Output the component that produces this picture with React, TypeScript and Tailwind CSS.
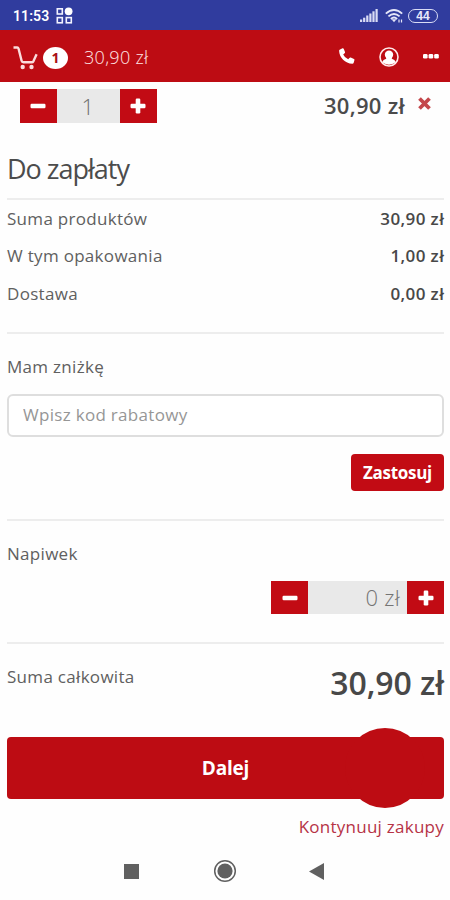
import React from "react";

function StatusBar() {
  return (
    <div className="flex h-[30px] items-center bg-[#303c9e] pt-[1px] pl-[13px] pr-[12px] text-white">
      <span className="font-[Roboto,sans-serif] text-[14px] leading-none font-semibold tracking-[0.1px]">11:53</span>
      <svg className="ml-[7px]" width="18" height="18" viewBox="0 0 18 18" fill="none" stroke="#f1f2ff" strokeWidth="1.6">
        <rect x="1.3" y="1.8" width="5" height="5.200" />
        <rect x="1.3" y="10.6" width="5" height="5.200" />
        <rect x="10.300" y="10.6" width="5" height="5.200" />
        <circle cx="12.6" cy="4.3" r="3.9" fill="#fff" stroke="none" />
      </svg>
      <svg className="ml-auto" width="18" height="13" viewBox="0 0 18 13" fill="#d9dcf5">
        <rect x="0" y="10.5" width="2.2" height="2.5" />
        <rect x="3.1" y="8.7" width="2.2" height="4.3" />
        <rect x="6.2" y="6.5" width="2.2" height="6.5" />
        <rect x="9.3" y="4.5" width="2.2" height="8.5" />
        <rect x="12.4" y="2.3" width="2.2" height="10.7" />
        <rect x="15.5" y="0" width="2.2" height="13" />
      </svg>
      <svg className="ml-[7px]" width="18" height="14" viewBox="0 0 18 14" fill="none" stroke="#e4e6f8" strokeWidth="1.9">
        <path d="M.8 4.6Q9-2.6 17.200 4.600" />
        <path d="M3.400 7.400Q9 2.400 14.600 7.400" />
        <path d="M5.900 10Q9 7 12.100 10" />
        <path d="M6.500 10.200L9 13.200L11.500 10.200Z" fill="#e4e6f8" stroke="none" />
        <path d="M14 10.500v3M16.500 10.500v3" strokeWidth="1.200" />
      </svg>
      <div className="ml-[5px] flex h-[14px] w-[30px] items-center justify-center rounded-full border-[1.500px] border-[#d9dcf5] font-['Liberation_Sans',sans-serif] text-[12px] leading-none font-bold text-[#e8eafb]">
        44
      </div>
    </div>
  );
}

function Header() {
  return (
    <div className="flex h-[52px] items-center bg-[#bd0c13] pl-[13px] pr-[11px] text-white">
      <svg className="mt-[2px]" width="25" height="25" viewBox="0 0 25 25" fill="none" stroke="#fbdcdc" strokeWidth="2.400">
        <path d="M.5 2.500H4.200Q5.200 2.500 5.500 3.500L8.600 15.800Q9 17.300 10.400 17.300H18.700Q19.900 17.300 20.500 16.100L23.600 9.300" />
        <circle cx="9.700" cy="22" r="2.200" fill="#fbdcdc" stroke="none" />
        <circle cx="18.500" cy="22" r="2.200" fill="#fbdcdc" stroke="none" />
      </svg>
      <div className="mt-[3px] ml-[5px] flex h-[22px] w-[25px] items-center justify-center rounded-[50%] bg-white text-[14px] leading-none font-bold text-[#a90f16]">1</div>
      <span className="mt-[1px] ml-[16px] text-[18px] leading-none font-light tracking-[0.300px] text-[#ffe5e5]">30,90 zł</span>
      <svg className="ml-auto" width="16" height="16" viewBox="0 0 16 16" fill="#fff">
        <path d="M.6 1.800L3.500.3Q4.300 0 4.700.8L6 4Q6.300 4.800 5.600 5.300L4.200 6.400Q5.800 9.800 9.200 11.300L10.400 9.900Q10.900 9.300 11.700 9.600L15 11.100Q15.700 11.500 15.400 12.300L14.600 14.900Q14.300 15.700 13.400 15.700C6 15.500.4 9.600.1 2.700Q.1 2.100.6 1.800Z" />
      </svg>
      <svg className="mt-[2px] ml-[24px]" width="20" height="20" viewBox="0 0 20 20">
        <circle cx="10" cy="10" r="9" fill="none" stroke="#ffe9e9" strokeWidth="1.600" />
        <circle cx="10" cy="7.700" r="4.200" fill="#fff" />
        <path d="M3.200 15.300Q4 12.500 7.200 11.700V10H12.800V11.700Q16 12.500 16.800 15.300Q10 20 3.200 15.300Z" fill="#fff" />
      </svg>
      <svg className="ml-[24px]" width="16" height="5" viewBox="0 0 16 5" fill="#fff">
        <rect width="4.600" height="4.600" rx="1.300" />
        <rect x="5.600" width="4.600" height="4.600" rx="1.300" />
        <rect x="11.200" width="4.600" height="4.600" rx="1.300" />
      </svg>
    </div>
  );
}

function StepButton({ plus = false }: { plus?: boolean }) {
  return (
    <button className="flex w-[37px] items-center justify-center bg-[#c20b14]">
      <svg width="16" height="16" viewBox="0 0 16 16" fill="#fff">
        <rect x=".5" y="5.700" width="15" height="4.600" rx="1.200" />
        {plus && <rect x="5.700" y=".5" width="4.600" height="15" rx="1.200" />}
      </svg>
    </button>
  );
}

function Row({ label, value }: { label: string; value: string }) {
  return (
    <div className="flex h-[37.500px] items-center justify-between">
      <span>{label}</span>
      <span className="mr-[-0.300px] font-semibold tracking-[0.400px] text-[#484848]">{value}</span>
    </div>
  );
}

function Divider() {
  return <div className="h-[2px] shrink-0 bg-[#ededed]" />;
}

export default function App() {
  return (
    <div className="flex h-[900px] w-[450px] flex-col overflow-hidden bg-[#fefefe] font-['Open_Sans','Noto_Sans',sans-serif] text-[#606060]">
      <StatusBar />
      <Header />
      <main className="flex flex-col pr-[6px] pl-[7px] text-[17px] leading-none tracking-[0.300px]">
        <div className="mt-[7px] flex h-[34px] items-center pl-[12.500px]">
          <div className="flex h-full">
            <StepButton />
            <div className="flex w-[63px] items-center justify-center bg-[#e9e9e9] text-[22px] font-light text-[#707070]">1</div>
            <StepButton plus />
          </div>
          <span className="mr-[13px] mb-[2px] ml-auto text-[22px] font-semibold tracking-[0.300px] text-[#4b4b4b]">30,90 zł</span>
          <svg className="mr-[13px] mb-[5px]" width="13" height="13" viewBox="0 0 13 13" stroke="#c4474b" strokeWidth="3.800">
            <path d="M1.500 1.500L11.500 11.500M11.500 1.500L1.500 11.500" />
          </svg>
        </div>
        <h1 className="flex h-[75px] items-center pt-[15px] text-[27px] font-normal tracking-[-1px] text-[#4c4c4c]">Do zapłaty</h1>
        <Divider />
        <div className="-mt-[0.500px] h-[113px]">
          <Row label="Suma produktów" value="30,90 zł" />
          <Row label="W tym opakowania" value="1,00 zł" />
          <Row label="Dostawa" value="0,00 zł" />
        </div>
        <div className="h-[19.500px]" />
        <Divider />
        <div className="flex h-[60px] items-center pt-[4px]">Mam zniżkę</div>
        <input
          className="h-[43px] w-full rounded-[6px] border-2 border-[#dedede] bg-white px-[14px] pb-[2px] text-[17px] tracking-[0.300px] outline-none placeholder:text-[#969696]"
          placeholder="Wpisz kod rabatowy"
        />
        <button className="mt-[17px] h-[37px] w-[93px] self-end rounded-[4px] bg-[#c20b14] text-[17px] font-bold tracking-[-0.300px] text-white">Zastosuj</button>
        <div className="h-[28px]" />
        <Divider />
        <div className="flex h-[60px] items-center pt-[4px]">Napiwek</div>
        <div className="flex h-[33px] self-end">
          <StepButton />
          <div className="flex w-[99px] items-center justify-end bg-[#e9e9e9] pr-[7px] pb-[1px] text-[22px] font-light tracking-[0.300px] text-[#747474]">0 zł</div>
          <StepButton plus />
        </div>
        <div className="h-[28px]" />
        <Divider />
        <div className="flex h-[93px] items-start justify-between">
          <span className="mt-[24px]">Suma całkowita</span>
          <span className="mt-[23px] text-[32px] font-semibold tracking-[-0.100px] text-[#484848]">30,90 zł</span>
        </div>
        <button className="relative h-[62px] rounded-[4px] bg-[#bd0c13] text-[19px] font-bold tracking-[-0.200px] text-white">
          <span className="absolute top-[-9px] right-[19px] h-[80px] w-[80px] rounded-full bg-[#bd0c13]" />
          <span className="relative">Dalej</span>
        </button>
        <a className="mt-[19px] self-end tracking-[0.250px] text-[#b63346]">Kontynuuj zakupy</a>
      </main>
      <nav className="mt-auto flex h-[58px] items-center pl-[124px]">
        <div className="h-[15px] w-[15px] bg-[#606060]" />
        <svg className="ml-[74px]" width="24" height="24" viewBox="0 0 24 24">
          <circle cx="12" cy="12" r="10.300" fill="none" stroke="#606060" strokeWidth="1.500" />
          <circle cx="12" cy="12" r="7.600" fill="#606060" />
        </svg>
        <svg className="ml-[72px]" width="15" height="17" viewBox="0 0 15 17" fill="#606060">
          <path d="M0 8.500L15 0V17Z" />
        </svg>
      </nav>
    </div>
  );
}
